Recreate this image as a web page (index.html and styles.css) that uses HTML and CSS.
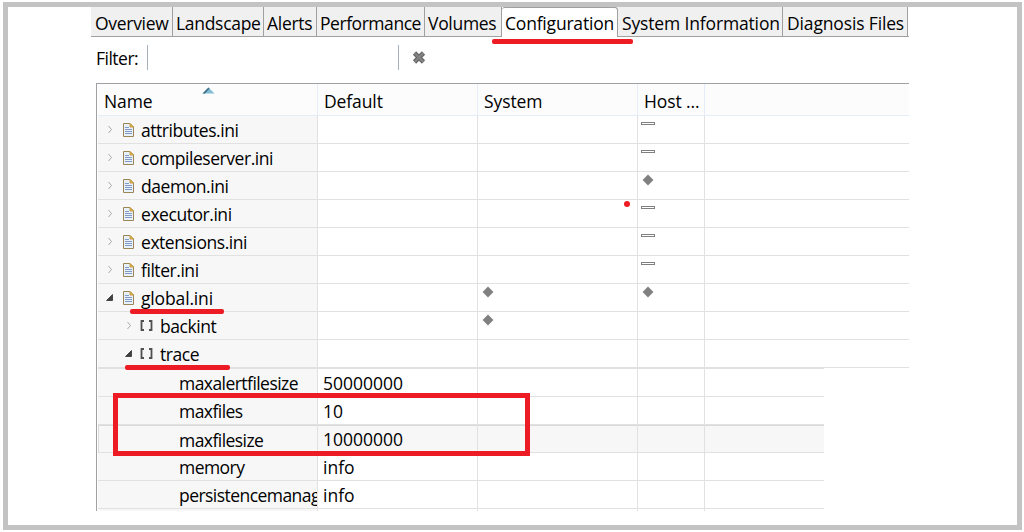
FILE: index.html
```
<!DOCTYPE html>
<html lang="en">
<head>
  <meta charset="UTF-8">
  <meta name="viewport" content="width=device-width, initial-scale=1.0">
  <title>Configuration</title>
  <link rel="stylesheet" href="styles.css">
</head>
<body>
  <!-- shared icons -->
  <svg class="sprite" width="0" height="0">
    <symbol id="file" viewBox="0 0 11 14">
      <path d="M.5 .5H7L10.500 4V13.500H.5Z" fill="#e9f1fb" stroke="#9b8658"/>
      <path d="M7 .5V4H10.500Z" fill="#e5b64f" stroke="#c59a43"/>
      <path d="M2 4.500H6M2 6.500H9M2 8.500H9M2 10.500H9" stroke="#8298c5"/>
    </symbol>
    <symbol id="closed" viewBox="0 0 7 9">
      <path d="M1.500 1L4.500 4.500L1.500 8" fill="none" stroke="#a8a8a8"/>
    </symbol>
    <symbol id="open" viewBox="0 0 7 7">
      <path d="M6.500 .5V6.500H.5Z" fill="#404040" stroke="#222" stroke-width=".7"/>
    </symbol>
    <symbol id="section" viewBox="0 0 13 11">
      <path d="M4 1H1.500V10H4M9 1H11.500V10H9" fill="none" stroke="#505050" stroke-width="1.800"/>
    </symbol>
    <symbol id="diamond" viewBox="0 0 12 12">
      <path d="M6 .6L11.400 6L6 11.400L.6 6Z" fill="#808080"/>
    </symbol>
  </svg>

  <div class="frame">
    <div class="panel">
      <div class="tabs">
        <div class="tab overview">Overview</div>
        <div class="tab landscape">Landscape</div>
        <div class="tab alerts">Alerts</div>
        <div class="tab performance">Performance</div>
        <div class="tab volumes">Volumes</div>
        <div class="tab configuration active">Configuration</div>
        <div class="tab system-info">System Information</div>
        <div class="tab diagnosis">Diagnosis Files</div>
      </div>

      <div class="filter">
        <label class="filter-label">Filter:</label>
        <div class="filter-input"></div>
        <svg class="clear" width="14" height="13" viewBox="0 0 14 13">
          <path d="M2.500 2L11.500 11M11.500 2L2.500 11" stroke="#686868" stroke-width="4.600"/>
          <path d="M2.500 2L11.500 11M11.500 2L2.500 11" stroke="#858585" stroke-width="2"/>
        </svg>
      </div>

      <div class="table">
        <div class="row header">
          <div class="cell">Name
            <svg class="sort" width="13" height="7" viewBox="0 0 13 7"><path d="M.5 6.500L6.500 .5L12.500 6.500Z" fill="#82bcd5"/><path d="M.5 6.500L6.500 .5L7.500 1.500L3 6.500Z" fill="#3c6d87"/></svg>
          </div>
          <div class="cell">Default</div>
          <div class="cell">System</div>
          <div class="cell">Host ...</div>
          <div class="cell"></div>
        </div>
        <div class="row">
          <div class="cell name"><svg class="arrow"><use href="#closed"/></svg><svg class="file"><use href="#file"/></svg><span>attributes.ini</span></div>
          <div class="cell"></div><div class="cell"></div><div class="cell mark"><i class="dash"></i></div><div class="cell"></div>
        </div>
        <div class="row">
          <div class="cell name"><svg class="arrow"><use href="#closed"/></svg><svg class="file"><use href="#file"/></svg><span>compileserver.ini</span></div>
          <div class="cell"></div><div class="cell"></div><div class="cell mark"><i class="dash"></i></div><div class="cell"></div>
        </div>
        <div class="row">
          <div class="cell name"><svg class="arrow"><use href="#closed"/></svg><svg class="file"><use href="#file"/></svg><span>daemon.ini</span></div>
          <div class="cell"></div><div class="cell"></div><div class="cell mark"><svg class="diamond"><use href="#diamond"/></svg></div><div class="cell"></div>
        </div>
        <div class="row">
          <div class="cell name"><svg class="arrow"><use href="#closed"/></svg><svg class="file"><use href="#file"/></svg><span>executor.ini</span></div>
          <div class="cell"></div><div class="cell"></div><div class="cell mark"><i class="dash"></i></div><div class="cell"></div>
        </div>
        <div class="row">
          <div class="cell name"><svg class="arrow"><use href="#closed"/></svg><svg class="file"><use href="#file"/></svg><span>extensions.ini</span></div>
          <div class="cell"></div><div class="cell"></div><div class="cell mark"><i class="dash"></i></div><div class="cell"></div>
        </div>
        <div class="row">
          <div class="cell name"><svg class="arrow"><use href="#closed"/></svg><svg class="file"><use href="#file"/></svg><span>filter.ini</span></div>
          <div class="cell"></div><div class="cell"></div><div class="cell mark"><i class="dash"></i></div><div class="cell"></div>
        </div>
        <div class="row">
          <div class="cell name"><svg class="arrow expanded"><use href="#open"/></svg><svg class="file"><use href="#file"/></svg><span class="wide">global.ini</span></div>
          <div class="cell"></div><div class="cell mark"><svg class="diamond"><use href="#diamond"/></svg></div><div class="cell mark"><svg class="diamond"><use href="#diamond"/></svg></div><div class="cell"></div>
        </div>
        <div class="row">
          <div class="cell name child"><svg class="arrow"><use href="#closed"/></svg><svg class="section"><use href="#section"/></svg><span>backint</span></div>
          <div class="cell"></div><div class="cell mark"><svg class="diamond"><use href="#diamond"/></svg></div><div class="cell"></div><div class="cell"></div>
        </div>
        <div class="row">
          <div class="cell name child"><svg class="arrow expanded"><use href="#open"/></svg><svg class="section"><use href="#section"/></svg><span>trace</span></div>
          <div class="cell"></div><div class="cell"></div><div class="cell"></div><div class="cell"></div>
        </div>

        <div class="params">
          <div class="row">
            <div class="cell name param"><span>maxalertfilesize</span></div>
            <div class="cell value">50000000</div><div class="cell"></div><div class="cell"></div><div class="cell"></div>
          </div>
          <div class="row">
            <div class="cell name param"><span>maxfiles</span></div>
            <div class="cell value">10</div><div class="cell"></div><div class="cell"></div><div class="cell"></div>
          </div>
          <div class="row selected">
            <div class="cell name param"><span>maxfilesize</span></div>
            <div class="cell value">10000000</div><div class="cell"></div><div class="cell"></div><div class="cell"></div>
          </div>
          <div class="row">
            <div class="cell name param"><span>memory</span></div>
            <div class="cell value">info</div><div class="cell"></div><div class="cell"></div><div class="cell"></div>
          </div>
          <div class="row">
            <div class="cell name param"><span>persistencemanag</span></div>
            <div class="cell value">info</div><div class="cell"></div><div class="cell"></div><div class="cell"></div>
          </div>
          <div class="row last">
            <div class="cell name"></div>
            <div class="cell"></div><div class="cell"></div><div class="cell"></div><div class="cell"></div>
          </div>
        </div>
      </div>
    </div>
  </div>

  <!-- red marker annotations -->
  <div class="marker marker-tab"></div>
  <div class="marker marker-global"></div>
  <div class="marker marker-trace"></div>
  <div class="marker marker-dot"></div>
  <div class="marker-box"></div>
</body>
</html>
```
FILE: styles.css
```
* {
  box-sizing: border-box;
}

body {
  margin: 0;
  padding: 2px 2px 2px 3px;
  height: 532px;
  overflow: hidden;
  background-color: #fff;
  color: #000;
  font-family: "Open Sans", "Noto Sans", sans-serif;
  font-size: 17.5px;
  letter-spacing: -0.1px;
  white-space: nowrap;
}

.sprite {
  position: absolute;
}

.frame {
  height: 528px;
  border: 5px solid #c3c3c3;
  padding-left: 83px;
}

.panel {
  width: 818px;
}

.tabs {
  display: flex;
  height: 30px;
  border-bottom: 1px solid #a0a0a0;
}

.tab {
  flex: none;
  padding-left: 4px;
  line-height: 33px;
  letter-spacing: -0.3px;
  background-color: #f0f0f0;
  border-right: 1px solid #a0a0a0;
}

.tab.active {
  height: 30px;
  padding-left: 3px;
  background-color: #fff;
  border-top: 1px solid #a0a0a0;
  border-radius: 3px 3px 0 0;
  line-height: 31px;
  letter-spacing: -0.2px;
}

.overview { width: 82px; }
.landscape { width: 91px; padding-left: 3px; }
.alerts { width: 53px; padding-left: 3px; }
.tab.performance { width: 108px; padding-left: 3px; letter-spacing: -0.45px; }
.volumes { width: 77px; padding-left: 3px; }
.configuration { width: 116px; }
.tab.system-info { width: 165px; letter-spacing: -0.15px; }
.tab.diagnosis { width: 125px; letter-spacing: -0.15px; }

.filter {
  display: flex;
  height: 46px;
  padding: 8px 0 0 5px;
}

.filter-label {
  width: 51px;
  line-height: 27px;
  letter-spacing: -0.5px;
}

.filter-input {
  width: 252px;
  height: 25px;
  border-left: 1px solid #a5b0bd;
  border-right: 1px solid #a5b0bd;
}

.clear {
  margin: 6px 0 0 13px;
}

.table {
  margin-left: 5px;
  height: 428px;
  padding-left: 1px;
  border-top: 1px solid #a0a0a5;
  border-left: 1px solid #a0a0a5;
  overflow: hidden;
}

.row {
  display: grid;
  grid-template-columns: 220px 160px 160px 67px 1fr;
  height: 28px;
}

.cell {
  display: flex;
  min-width: 0;
  overflow: hidden;
  border-right: 1px solid #e1e1e1;
  border-bottom: 1px solid #e1e1e1;
  line-height: 29px;
}

.cell:last-child {
  border-right: none;
}

.header {
  height: 32px;
}

.header .cell {
  position: relative;
  padding: 1px 0 0 6px;
  line-height: 32px;
  background-color: #fcfcfc;
  border-color: #e5eef8;
}

.sort {
  position: absolute;
  left: 104px;
  top: 3px;
}

.name {
  align-items: center;
  padding-left: 9px;
  background-color: #f7f7f7;
  letter-spacing: -0.45px;
}

.name span {
  padding-top: 2px;
}

.name .wide {
  letter-spacing: -0.15px;
}

.name.child {
  padding-left: 28px;
}

.name.param {
  padding-left: 81px;
  letter-spacing: -0.55px;
}

.value {
  padding-left: 5px;
  letter-spacing: 0;
}

.arrow {
  flex: none;
  width: 7px;
  height: 9px;
  margin-right: 9px;
}

.arrow.expanded {
  height: 7px;
  margin: 0 10px 0 -1px;
}

.file {
  flex: none;
  width: 11px;
  height: 14px;
  margin: 1px 7px 0 0;
}

.section {
  flex: none;
  width: 13px;
  height: 11px;
  margin: 0 7px 0 -2px;
}

.mark {
  padding: 6px 0 0 3px;
}

.dash {
  width: 14px;
  height: 3px;
  border: 1px solid #808080;
}

.diamond {
  width: 12px;
  height: 12px;
  margin: -4px 0 0 1px;
}

.params {
  width: 726px;
  border-top: 1px solid #e1e1e1;
}

.selected .cell {
  background-color: #f7f7f7;
  border-top: 1px solid #dadada;
  line-height: 27px;
}

.selected .name {
  border-left: 1px solid #dadada;
  padding-left: 80px;
}

.last {
  height: 2px;
}

.last .cell {
  border-bottom: none;
}

.marker {
  position: absolute;
  height: 5px;
  border-radius: 2px;
  background-color: #ed1c24;
}

.marker-tab {
  left: 492px;
  top: 39px;
  width: 141px;
}

.marker-global {
  left: 130px;
  top: 309px;
  width: 94px;
}

.marker-trace {
  left: 125px;
  top: 365px;
  width: 105px;
}

.marker-dot {
  left: 624px;
  top: 201px;
  width: 6px;
  height: 6px;
  border-radius: 3px;
}

.marker-box {
  position: absolute;
  left: 113px;
  top: 393px;
  width: 417px;
  height: 63px;
  border: 5px solid #ed1c24;
}
```
